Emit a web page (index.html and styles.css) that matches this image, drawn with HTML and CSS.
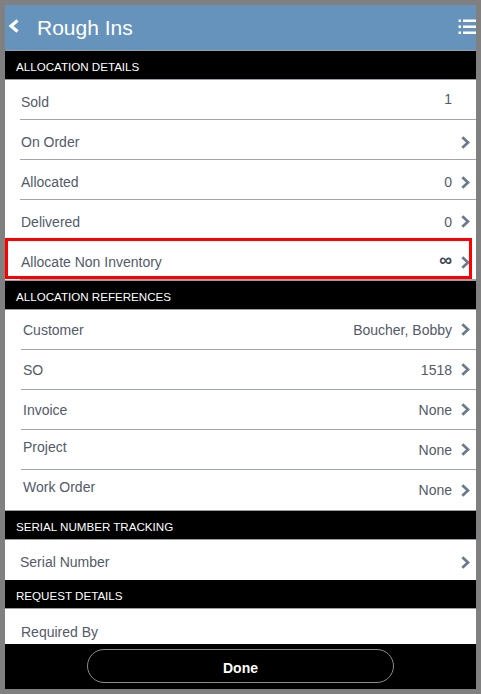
FILE: index.html
```html
<!DOCTYPE html>
<html>
<head>
<meta charset="utf-8">
<title>Rough Ins</title>
<link rel="stylesheet" href="styles.css">
</head>
<body>
<div class="screen">
  <header class="topbar">
    <svg class="back" width="12" height="14" viewBox="0 0 12 14"><polyline points="9.5,1.5 3,7 9.5,12.5" fill="none" stroke="#fff" stroke-width="3.2"/></svg>
    <h1 class="title">Rough Ins</h1>
    <svg class="menu" width="18" height="15" viewBox="0 0 18 15">
      <rect x="0.5" y="0.5" width="2.5" height="2.5" fill="#fff"/>
      <rect x="5" y="0.5" width="13" height="2.5" fill="#fff"/>
      <rect x="0.5" y="6.5" width="2.5" height="2.5" fill="#fff"/>
      <rect x="5" y="6.5" width="13" height="2.5" fill="#fff"/>
      <rect x="0.5" y="12.5" width="2.5" height="2.5" fill="#fff"/>
      <rect x="5" y="12.5" width="13" height="2.5" fill="#fff"/>
    </svg>
  </header>
  <div class="content">
    <div class="section-title">Allocation Details</div>
    <ul class="list list-a">
      <li class="row"><span class="label">Sold</span><span class="value value-up">1</span><span class="chev-space"></span></li>
      <li class="row"><span class="label">On Order</span><svg class="chev" width="9" height="13" viewBox="0 0 9 13"><polyline points="1.3,1.3 7,6.5 1.3,11.7" fill="none" stroke="#6b7b8b" stroke-width="2.8"/></svg></li>
      <li class="row"><span class="label">Allocated</span><span class="value">0</span><svg class="chev" width="9" height="13" viewBox="0 0 9 13"><polyline points="1.3,1.3 7,6.5 1.3,11.7" fill="none" stroke="#6b7b8b" stroke-width="2.8"/></svg></li>
      <li class="row row-last"><span class="label">Delivered</span><span class="value">0</span><svg class="chev" width="9" height="13" viewBox="0 0 9 13"><polyline points="1.3,1.3 7,6.5 1.3,11.7" fill="none" stroke="#6b7b8b" stroke-width="2.8"/></svg></li>
      <li class="row row-highlight"><span class="label">Allocate Non Inventory</span><span class="value value-inf">∞</span><svg class="chev" width="9" height="13" viewBox="0 0 9 13"><polyline points="1.3,1.3 7,6.5 1.3,11.7" fill="none" stroke="#6b7b8b" stroke-width="2.8"/></svg></li>
    </ul>
    <div class="section-title">Allocation References</div>
    <ul class="list list-b">
      <li class="row"><span class="label">Customer</span><span class="value">Boucher, Bobby</span><svg class="chev" width="9" height="13" viewBox="0 0 9 13"><polyline points="1.3,1.3 7,6.5 1.3,11.7" fill="none" stroke="#6b7b8b" stroke-width="2.8"/></svg></li>
      <li class="row"><span class="label">SO</span><span class="value">1518</span><svg class="chev" width="9" height="13" viewBox="0 0 9 13"><polyline points="1.3,1.3 7,6.5 1.3,11.7" fill="none" stroke="#6b7b8b" stroke-width="2.8"/></svg></li>
      <li class="row"><span class="label">Invoice</span><span class="value">None</span><svg class="chev" width="9" height="13" viewBox="0 0 9 13"><polyline points="1.3,1.3 7,6.5 1.3,11.7" fill="none" stroke="#6b7b8b" stroke-width="2.8"/></svg></li>
      <li class="row"><span class="label label-up">Project</span><span class="value">None</span><svg class="chev" width="9" height="13" viewBox="0 0 9 13"><polyline points="1.3,1.3 7,6.5 1.3,11.7" fill="none" stroke="#6b7b8b" stroke-width="2.8"/></svg></li>
      <li class="row row-last"><span class="label label-up">Work Order</span><span class="value">None</span><svg class="chev" width="9" height="13" viewBox="0 0 9 13"><polyline points="1.3,1.3 7,6.5 1.3,11.7" fill="none" stroke="#6b7b8b" stroke-width="2.8"/></svg></li>
    </ul>
    <div class="section-title">Serial Number Tracking</div>
    <ul class="list list-c">
      <li class="row row-last"><span class="label">Serial Number</span><svg class="chev" width="9" height="13" viewBox="0 0 9 13"><polyline points="1.3,1.3 7,6.5 1.3,11.7" fill="none" stroke="#6b7b8b" stroke-width="2.8"/></svg></li>
    </ul>
    <div class="section-title section-title-flat">Request Details</div>
    <ul class="list list-d">
      <li class="row row-last"><span class="label">Required By</span></li>
    </ul>
  </div>
  <footer class="footer">
    <button class="done">Done</button>
  </footer>
</div>
</body>
</html>
```

FILE: styles.css
```css
* { box-sizing: border-box; }

html, body {
  margin: 0;
  padding: 0;
  background: #808080;
}

body {
  font-family: "Liberation Sans", Arial, sans-serif;
}

.screen {
  margin: 5px;
  width: 471px;
  height: 684px;
  background: #fff;
  display: flex;
  flex-direction: column;
  overflow: hidden;
}

.topbar {
  flex: 0 0 45px;
  height: 45px;
  background: #6693bc;
  display: flex;
  align-items: center;
  padding-left: 3px;
}

.back {
  display: block;
  margin-top: -3px;
}

.title {
  margin: 0 0 0 17px;
  font-size: 21px;
  font-weight: normal;
  color: #fff;
  flex: 1;
  line-height: 1;
}

.menu {
  display: block;
  margin-top: -3px;
}

.content {
  flex: 1;
  overflow: hidden;
}

.section-title {
  height: 30px;
  background: #000;
  color: #fff;
  font-size: 11.6px;
  text-transform: uppercase;
  padding: 3px 0 0 11px;
  display: flex;
  align-items: center;
  border-top: 1px solid #9a9ea2;
  border-bottom: 1px solid #9a9ea2;
}

.section-title-flat {
  border-top: none;
  height: 29px;
}

.list {
  list-style: none;
  margin: 0;
  padding: 0;
}

.row {
  height: 40px;
  display: flex;
  align-items: center;
  border-bottom: 1px solid #a2a6aa;
  padding-right: 6px;
  font-size: 14px;
  color: #535a6a;
}

.row-last {
  border-bottom: none;
}

.label {
  flex: 1;
}

.value {
  margin-right: 9px;
}

.chev-space {
  width: 9px;
}

.chev {
  display: block;
}

.list-a .row {
  margin-left: 15px;
  padding-left: 1px;
  padding-top: 5px;
}

.list-a .row-last {
  height: 38px;
}

.value-up {
  margin-top: -6px;
}

.value-inf {
  font-weight: bold;
  font-size: 18px;
  color: #3e4452;
  margin-top: -3px;
}

.row-highlight {
  height: 42px;
  position: relative;
}

.list-a .row-highlight {
  height: 42px;
  padding-top: 7px;
}

.row-highlight::after {
  content: "";
  position: absolute;
  left: -15px;
  right: 4px;
  top: 0;
  bottom: 0;
  border: 3px solid #ff0000;
}

.list-b .row {
  margin-left: 16px;
  padding-left: 2px;
}

.label-up {
  margin-bottom: 6px;
}

.list-c .row {
  padding-left: 15px;
  padding-top: 4px;
}

.list-d .row {
  height: 35px;
  padding-left: 16px;
  padding-top: 10px;
}

.footer {
  flex: 0 0 45px;
  background: #000;
  display: flex;
  justify-content: center;
  padding-top: 5px;
}

.done {
  width: 307px;
  height: 34px;
  border: 1px solid #8c8c8c;
  border-radius: 17px;
  background: #000;
  color: #fff;
  font-family: "Liberation Sans", Arial, sans-serif;
  font-weight: bold;
  font-size: 14px;
  padding: 4px 0 0;
}
```
